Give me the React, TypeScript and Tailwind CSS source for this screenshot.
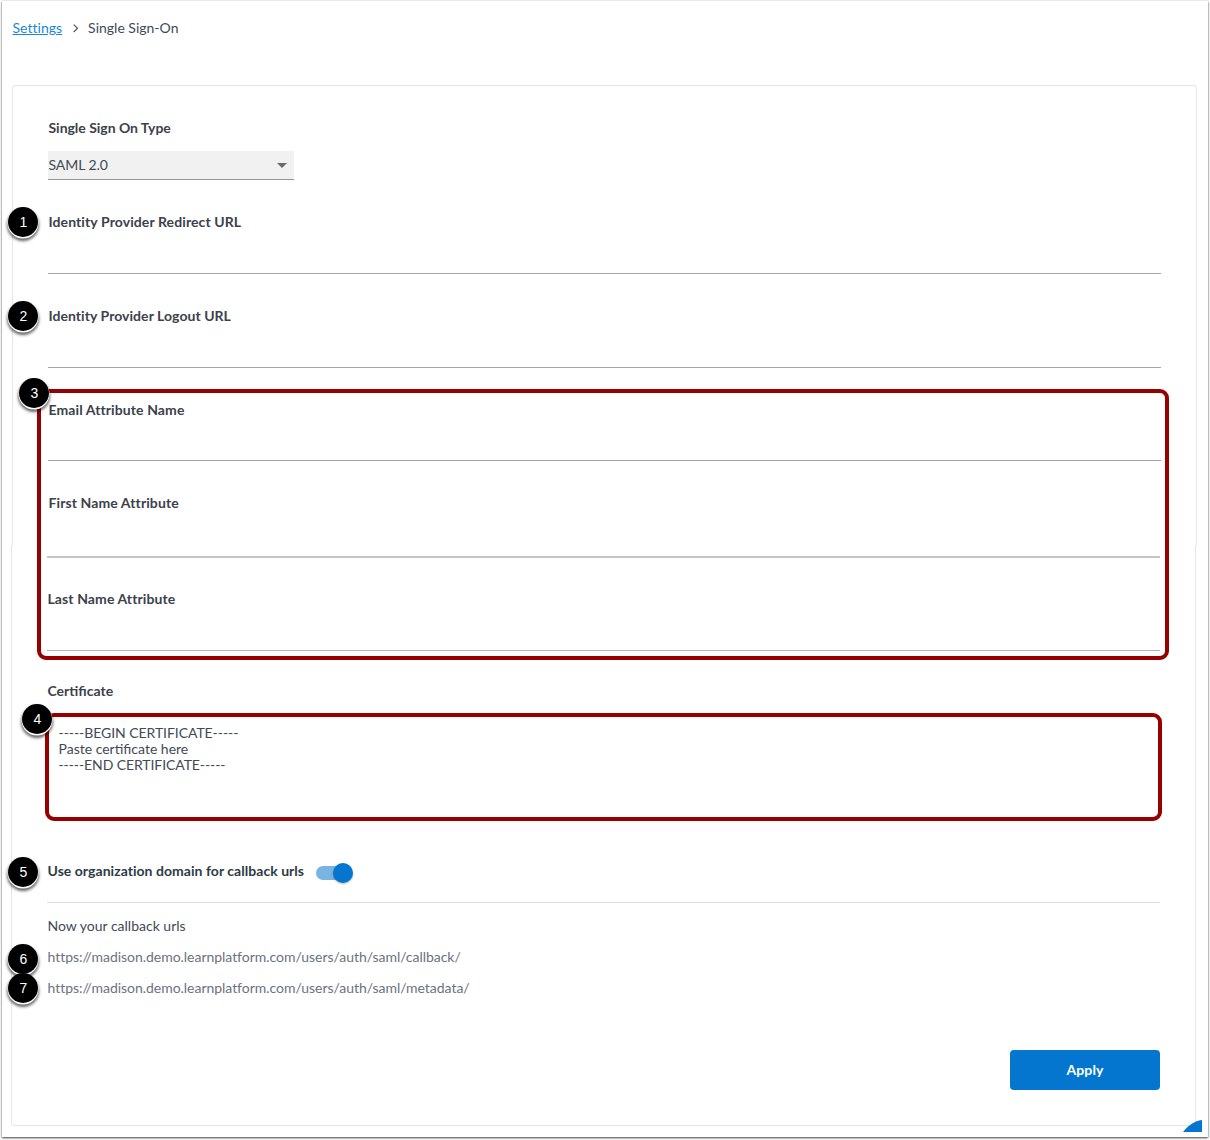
import type { ReactNode } from "react";

function Marker({ n, className }: { n: number; className: string }) {
  return (
    <span
      className={`absolute z-20 flex h-[30px] w-[30px] items-center justify-center rounded-full bg-black pl-px font-['Liberation_Sans',sans-serif] text-[14px] leading-none tracking-normal text-white shadow-[0_1px_0_0.5px_#fff,0_3px_3px_1px_rgba(0,0,0,0.6)] ${className}`}
    >
      {n}
    </span>
  );
}

function Label({ children, className = "tracking-[0.1px]" }: { children: ReactNode; className?: string }) {
  return <div className={`h-5 pl-[0.5px] text-[14px] leading-5 font-bold text-[#3c414b] ${className}`}>{children}</div>;
}

export default function App() {
  return (
    <div className="h-[1140px] w-[1210px] overflow-hidden bg-white pt-px pl-0.5 font-[Lato,sans-serif] text-[14px] text-[#3f4a56]">
      <div className="relative h-[1136px] w-[1206px] bg-white pt-[17px] shadow-[0_1px_2px_0_rgba(0,0,0,0.75),0_0_1px_0_rgba(0,0,0,0.2)]">
        <nav className="flex h-5 items-center pl-[10.5px] leading-5">
          <a href="#" className="tracking-[0.02px] text-[#1a88db] underline">Settings</a>
          <svg className="ml-[9px] mr-[8px] h-[9px] w-[9px]" viewBox="0 0 9 9" fill="none" stroke="#5a626c" strokeWidth="1.3">
            <path d="M2.7 0.6 6.5 4.3 2.7 8" />
          </svg>
          <span>Single Sign-On</span>
        </nav>

        <main className="mt-[47px] ml-[9px] w-[1186px]">
          <section className="relative ml-px h-[460px] rounded-t border border-b-0 border-[#e6e6e6] px-[35px] pt-8">
            <Label className="tracking-[-0.03px]">Single Sign On Type</Label>
            <div className="mt-[13px] flex h-[29px] w-[246px] items-center justify-between border-b border-[#949494] bg-[#f1f1f1] pr-[7px] pl-[0.5px]">
              <span className="pb-0.5 tracking-[-0.06px]">SAML 2.0</span>
              <svg className="h-[5px] w-[10px]" viewBox="0 0 10 5" fill="#6b6b6b">
                <path d="M0 0h10L5 5z" />
              </svg>
            </div>

            <div className="relative mt-8 h-[62px] border-b border-[#a5a5a5]">
              <Marker n={1} className="-top-[5px] -left-10" />
              <Label>Identity Provider Redirect URL</Label>
            </div>
            <div className="relative mt-8 h-[62px] border-b border-[#a5a5a5]">
              <Marker n={2} className="-top-[5px] -left-10" />
              <Label className="tracking-[0.05px]">Identity Provider Logout URL</Label>
            </div>
            <div className="relative mt-8 h-[61px] border-b border-[#a5a5a5]">
              <Label>Email Attribute Name</Label>
              <div className="pointer-events-none absolute -top-[11px] -left-[11px] z-10 h-[271px] w-[1132px] rounded-[9px] border-4 border-[#960000]" />
              <Marker n={3} className="-top-[22px] -left-[29px]" />
            </div>
            <div className="mt-8">
              <Label>First Name Attribute</Label>
            </div>
          </section>

          <section className="relative h-[581px] w-[1185px] rounded-b border border-t-0 border-[#e6e6e6] px-[35px]">
            <div className="h-[13px] border-b-2 border-[#c4c4c4]" />
            <div className="mt-[31px] h-[62px] border-b border-[#b4b4b4]">
              <Label>Last Name Attribute</Label>
            </div>
            <div className="mt-[30px]">
              <Label className="text-[14.3px]">Certificate</Label>
            </div>
            <div className="relative mt-3 -mr-0.5 -ml-0.5 h-[108px] rounded-[9px] border-4 border-[#960000] px-[9.5px] pt-2 leading-4">
              <Marker n={4} className="-top-[13px] -left-[27px]" />
              <p className="tracking-[-0.06px]">-----BEGIN CERTIFICATE-----</p>
              <p>Paste certificate here</p>
              <p className="tracking-[-0.09px]">-----END CERTIFICATE-----</p>
            </div>

            <div className="relative mt-10 flex h-[42px] items-start border-b border-[#dedede] pl-[0.5px]">
              <Marker n={5} className="-top-1 -left-[39px]" />
              <span className="leading-5 font-bold tracking-[0.04px] text-[#2d3b45]">
                Use organization domain for callback urls
              </span>
              <span className="mt-[5px] ml-3 flex h-[14px] w-[36px] items-center justify-end rounded-full bg-[#7ab4e2]">
                <span className="-mr-px h-5 w-5 shrink-0 rounded-full bg-[#0476cf] shadow-[0_1px_2px_rgba(0,0,0,0.3)]" />
              </span>
            </div>

            <p className="mt-[13px] pl-[0.5px] leading-5">Now your callback urls</p>
            <div className="relative mt-[11px] pl-[0.5px] leading-5 tracking-[-0.035px] text-[#6b7280]">
              <Marker n={6} className="-top-[3px] -left-[39px]" />
              https://madison.demo.learnplatform.com/users/auth/saml/callback/
            </div>
            <div className="relative mt-[11px] pl-[0.5px] leading-5 tracking-[-0.035px] text-[#6b7280]">
              <Marker n={7} className="-top-[5px] -left-[39px]" />
              https://madison.demo.learnplatform.com/users/auth/saml/metadata/
            </div>

            <div className="mt-[52px] flex justify-end">
              <button className="h-10 w-[150px] rounded bg-[#0476cf] pb-0.5 font-bold tracking-[0.1px] text-white">Apply</button>
            </div>
          </section>
        </main>

        {/* corner of the help bubble */}
        <svg className="absolute right-[6px] bottom-[5px] h-[12px] w-[19px]" viewBox="0 0 19 12" fill="#0476cf">
          <path d="M19 0C11.500 1 5.500 5 0 12H19z" />
        </svg>
      </div>
    </div>
  );
}
